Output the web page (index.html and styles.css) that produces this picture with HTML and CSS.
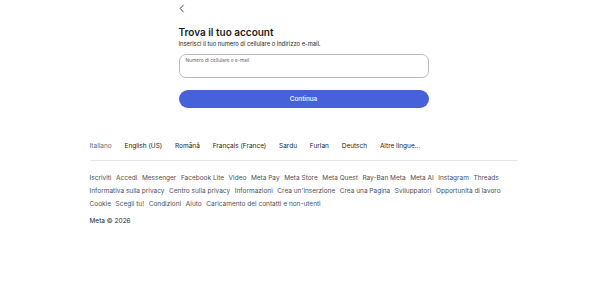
FILE: index.html
```html
<!DOCTYPE html>
<html lang="it">
<head>
<meta charset="utf-8">
<title>Trova il tuo account</title>
<link rel="stylesheet" href="styles.css">
</head>
<body>
<main class="page">
  <section class="card">
    <button class="back" aria-label="Indietro">
      <svg width="6" height="9" viewBox="0 0 6 9"><path d="M4.6 0.8 L1.2 4.5 L4.6 8.2" fill="none" stroke="#1c1e21" stroke-width="0.8"/></svg>
    </button>
    <h1 class="title">Trova il tuo account</h1>
    <p class="subtitle">Inserisci il tuo numero di cellulare o indirizzo e-mail.</p>
    <label class="field">
      <span class="field-label">Numero di cellulare o e-mail</span>
    </label>
    <button class="primary">Continua</button>
  </section>
  <footer class="footer">
    <ul class="langs">
      <li class="current">Italiano</li>
      <li>English (US)</li>
      <li>Română</li>
      <li>Français (France)</li>
      <li>Sardu</li>
      <li>Furlan</li>
      <li>Deutsch</li>
      <li>Altre lingue...</li>
    </ul>
    <hr class="sep">
    <ul class="links">
      <li>Iscriviti</li><li>Accedi</li><li>Messenger</li><li>Facebook Lite</li><li>Video</li><li>Meta Pay</li><li>Meta Store</li><li>Meta Quest</li><li>Ray-Ban Meta</li><li>Meta AI</li><li>Instagram</li><li>Threads</li>
    </ul>
    <ul class="links">
      <li>Informativa sulla privacy</li><li>Centro sulla privacy</li><li>Informazioni</li><li>Crea un'inserzione</li><li>Crea una Pagina</li><li>Sviluppatori</li><li>Opportunità di lavoro</li>
    </ul>
    <ul class="links">
      <li>Cookie</li><li>Scegli tu!</li><li>Condizioni</li><li>Aiuto</li><li>Caricamento dei contatti e non-utenti</li>
    </ul>
    <p class="copy">Meta © 2026</p>
  </footer>
</main>
</body>
</html>
```
FILE: styles.css
```css
* { box-sizing: border-box; }
html, body { margin: 0; padding: 0; background: #fff; }
body { font-family: "Inter", "Noto Sans", sans-serif; color: #1c1e21; }
.page { display: flex; flex-direction: column; align-items: center; padding-right: 3px; }
.card { width: 250px; display: flex; flex-direction: column; padding-top: 3px; }
.back { border: 0; background: none; padding: 0; margin: 0; width: 10px; height: 10px; display: flex; align-items: center; }
.title { font-size: 10px; font-weight: 600; margin: 13px 0 0; line-height: 12px; }
.subtitle { font-size: 5.8px; margin: 1px 0 0; line-height: 9px; }
.field { display: block; margin-top: 5.5px; height: 24px; border: 1px solid #b8bcc2; border-radius: 7px; padding: 2px 6px; }
.field-label { font-size: 4.8px; color: #65676b; display: block; line-height: 6px; }
.primary { margin-top: 12px; height: 18px; border: 0; border-radius: 10px; background: #4661d9; color: #fff; font-family: inherit; font-size: 6.4px; font-weight: 500; padding: 0; }
.footer { width: 428px; margin-top: 32px; }
.langs, .links { list-style: none; margin: 0; padding: 0; display: flex; }
.langs { gap: 0 12.8px; font-size: 6.5px; color: #1c1e21; }
.langs li { line-height: 12px; }
.langs .current { color: #65676b; }
.sep { border: 0; border-top: 1px solid #e4e6eb; margin: 8px 0 11.5px; }
.links { gap: 0 4.6px; font-size: 6.5px; color: #4b4f56; }
.links li { line-height: 13px; }
.copy { font-size: 6.5px; margin: 4px 0 0; color: #1c1e21; line-height: 13px; }
```
